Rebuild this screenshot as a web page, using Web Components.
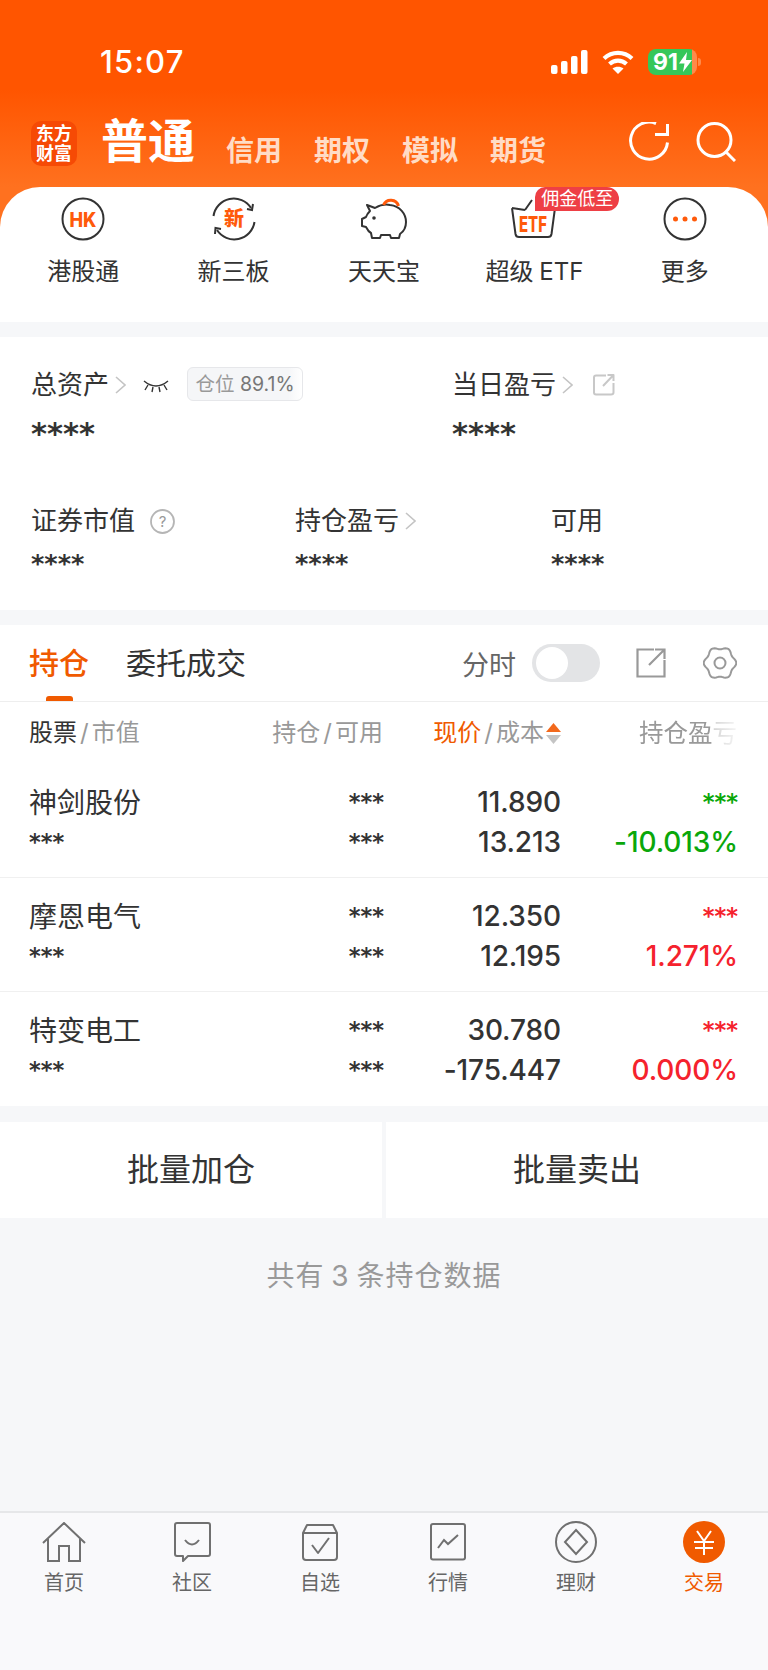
<!DOCTYPE html>
<html lang="zh">
<head>
<meta charset="utf-8">
<title>交易</title>
<style>
    html, body { margin: 0; padding: 0; }
    body {
        width: 768px;
        height: 1670px;
        overflow: hidden;
        display: flex;
        flex-direction: column;
        background: #f6f7f9;
        color: #333;
        font-family: Inter, "Noto Sans CJK SC", sans-serif;
    }
</style>
</head>
<body>
<top-area></top-area>
<asset-panel></asset-panel>
<position-panel>
    <stock-row name="神剑股份" price="11.890" cost="13.213" pl="-10.013%" tone="down"></stock-row>
    <stock-row name="摩恩电气" price="12.350" cost="12.195" pl="1.271%" tone="up"></stock-row>
    <stock-row name="特变电工" price="30.780" cost="-175.447" pl="0.000%" tone="up"></stock-row>
</position-panel>
<batch-buttons></batch-buttons>
<empty-note>共有 3 条持仓数据</empty-note>
<tab-bar></tab-bar>

<script>
const ORANGE = "#f05a00";
const STARS = `"DejaVu Sans", sans-serif`;

function gearPath(c, mid, amp) {
    const pts = [];
    for (let i = 0; i < 72; i++) {
        const t = i * Math.PI / 36;
        const r = mid + amp * Math.cos(6 * t);
        pts.push((c + r * Math.cos(t)).toFixed(2) + " " + (c + r * Math.sin(t)).toFixed(2));
    }
    return "M" + pts.join("L") + "Z";
}

customElements.define("quick-item",
class QuickItem extends HTMLElement {
    constructor() {
        super();
        this.attachShadow({mode: "open"});
        this.shadowRoot.innerHTML = `
<style>
    :host { display: flex; flex-direction: column; align-items: center; flex: 1; position: relative; }
    .icon { height: 50px; margin-top: 7px; display: flex; align-items: center; justify-content: center; }
    .label { margin-top: 10px; font-size: 24px; line-height: 36px; color: #333; white-space: nowrap; word-spacing: -1px; }
</style>
<div class="icon"><slot name="icon"></slot></div>
<div class="label"><slot></slot></div>
<slot name="badge"></slot>`;
    }
});

customElements.define("top-area",
class TopArea extends HTMLElement {
    constructor() {
        super();
        this.attachShadow({mode: "open"});
        this.shadowRoot.innerHTML = `
<style>
    :host {
        display: block;
        background: linear-gradient(#ff5500 0, #ff5500 90px, #ff711f 187px, #ff711f 100%);
    }
    .status { height: 100px; display: flex; align-items: center; padding: 24px 67px 0 100px; box-sizing: border-box; }
    .time { font-size: 31px; letter-spacing: 1.2px; font-weight: 500; color: #fff; line-height: 40px; flex: 1; margin-top: -1px; }
    .status svg { display: block; }
    .wifi { margin-left: 14px; }
    .battery { margin-left: 14px; display: flex; align-items: center; }
    .cell {
        width: 49px; height: 26px; border-radius: 8px; box-sizing: border-box; padding-left: 5px;
        background: linear-gradient(90deg, #35c759 0, #35c759 44px, #ff8a4a 44px);
        color: #fff; font-size: 23px; font-weight: 700; line-height: 26px;
        display: flex; align-items: center;
    }
    .tip { width: 3px; height: 8px; border-radius: 0 3px 3px 0; background: #ff8a4a; margin-left: 1px; }
    .nav { height: 87px; display: flex; align-items: center; padding: 0 32px 0 31px; }
    .logo {
        width: 46px; height: 45px; border-radius: 10px; background: #f64a05;
        color: #fff; font-size: 18px; font-weight: 700; line-height: 20px; text-align: center;
        display: flex; align-items: center; justify-content: center;
    }
    .main { margin-left: 24px; font-size: 47px; font-weight: 700; color: #fff; line-height: 60px; margin-top: -5px; }
    .subs { display: flex; gap: 32px; margin-left: 31px; flex: 1; font-size: 28px; font-weight: 700; color: #ffdcc6; line-height: 40px; padding-top: 14px; }
    .tools { display: flex; gap: 27px; align-items: center; margin-top: -4px; }
    .card {
        background: #fff;
        border-radius: 40px 40px 0 0;
        height: 135px;
        padding: 0 8px;
        display: flex;
        box-sizing: border-box;
    }
    svg text { font-family: Inter, "Noto Sans CJK SC", sans-serif; }
    .badge {
        position: absolute; top: 0; left: 76px; width: 84px; height: 24px;
        background: #ee3f45; color: #fff; font-size: 18px; line-height: 24px; text-align: center;
        border-radius: 10px 12px 12px 0; white-space: nowrap;
    }
</style>
<div class="status">
    <div class="time">15:07</div>
    <svg width="37" height="24" viewBox="0 0 37 24" fill="#fff">
        <rect x="0" y="15" width="6.5" height="9" rx="2"/><rect x="10" y="11" width="6.5" height="13" rx="2"/>
        <rect x="20" y="6" width="6.5" height="18" rx="2"/><rect x="30" y="0" width="6.5" height="24" rx="2"/>
    </svg>
    <svg class="wifi" width="32" height="24" viewBox="0 0 32 24">
        <path d="M2 8.5C10 1 22 1 30 8.5M7.5 14C12.5 9.5 19.5 9.5 24.5 14" fill="none" stroke="#fff" stroke-width="4.2"/>
        <path d="M16 24L10.5 18.5C13.5 16 18.5 16 21.5 18.5Z" fill="#fff"/>
    </svg>
    <div class="battery">
        <div class="cell">91<svg width="13" height="20" viewBox="0 0 13 20" style="margin-left:1px"><path d="M8 0L0 11.5H5.5L4 20L13 8H7Z" fill="#fff"/></svg></div>
        <div class="tip"></div>
    </div>
</div>
<div class="nav">
    <div class="logo"><span>东方<br>财富</span></div>
    <div class="main">普通</div>
    <div class="subs"><span>信用</span><span>期权</span><span>模拟</span><span>期货</span></div>
    <div class="tools">
        <svg width="40" height="40" viewBox="0 0 40 40" fill="none" stroke="#fff" stroke-width="3">
            <path d="M27 1.5A18.5 18.5 0 1 0 38.500 20.500"/><path d="M26 12.500H38.500V2"/>
        </svg>
        <svg width="40" height="40" viewBox="0 0 40 40" fill="none" stroke="#fff" stroke-width="3">
            <circle cx="18.5" cy="18" r="16.5"/><path d="M30 30L39 39"/>
        </svg>
    </div>
</div>
<div class="card">
    <quick-item>
        <svg slot="icon" width="44" height="44" viewBox="0 0 44 44">
            <circle cx="22" cy="22" r="20.5" fill="none" stroke="#333" stroke-width="2"/>
            <text x="22" y="29.500" text-anchor="middle" font-size="20" font-weight="800" fill="#ff5a0a" textLength="27" lengthAdjust="spacingAndGlyphs">HK</text>
        </svg>
        港股通
    </quick-item>
    <quick-item>
        <svg slot="icon" width="44" height="44" viewBox="0 0 44 44" fill="none" stroke="#333" stroke-width="2">
            <path d="M1.5 19A20.5 20.5 0 0 1 39 11"/><path d="M35 12L40 13L41 7"/>
            <path d="M42.5 25A20.5 20.5 0 0 1 5 33"/><path d="M9 32L3.5 31L3 37"/>
            <text x="22" y="29" text-anchor="middle" font-size="20" font-weight="900" fill="#ff5a0a" stroke="none">新</text>
        </svg>
        新三板
    </quick-item>
    <quick-item>
        <svg slot="icon" width="48" height="44" viewBox="0 0 48 44" fill="none" stroke="#333" stroke-width="2" stroke-linejoin="round">
            <path d="M7 8L15 11C20 8 26 7 30 8C40 9 46 17 46 25C46 31 43 35 40 37L39 41H31L30 38H21L20 41H12L11 36C9 35 7 32 6 30L2 29V22L6 20C7 17 9 15 10 14Z"/>
            <circle cx="14" cy="21" r="1.8" fill="#333" stroke="none"/>
            <path d="M23.5 8A8 8 0 0 1 38.5 9" stroke="#ff5a0a" stroke-width="3"/>
        </svg>
        天天宝
    </quick-item>
    <quick-item>
        <svg slot="icon" width="48" height="44" viewBox="0 0 48 44" fill="none" stroke="#333" stroke-width="2" stroke-linejoin="round">
            <path d="M15 13L22 3M2 11L15 13M2 11L5.5 37Q6 40 9 40H38Q41 40 41.5 37L45 11"/>
            <text x="23" y="35" text-anchor="middle" font-size="21" font-weight="800" fill="#ff5a0a" stroke="none" textLength="28" lengthAdjust="spacingAndGlyphs">ETF</text>
        </svg>
        超级 ETF
        <div slot="badge" class="badge">佣金低至</div>
    </quick-item>
    <quick-item>
        <svg slot="icon" width="44" height="44" viewBox="0 0 44 44">
            <circle cx="22" cy="22" r="20.5" fill="none" stroke="#333" stroke-width="2"/>
            <circle cx="12.5" cy="22" r="2.5" fill="#ff5a0a"/><circle cx="22" cy="22" r="2.5" fill="#ff5a0a"/><circle cx="31.5" cy="22" r="2.5" fill="#ff5a0a"/>
        </svg>
        更多
    </quick-item>
</div>`;
    }
});

customElements.define("asset-panel",
class AssetPanel extends HTMLElement {
    constructor() {
        super();
        this.attachShadow({mode: "open"});
        const chevron = `<svg class="chev" width="11" height="18" viewBox="0 0 11 18" fill="none" stroke="#c4c4c4" stroke-width="1.6"><path d="M1 1L10 9L1 17"/></svg>`;
        const share = `<svg width="22" height="22" viewBox="0 0 22 22" fill="none" stroke="#c8c8c8" stroke-width="2" stroke-linejoin="round"><path d="M13 1.5H3Q1 1.5 1 3.5V18.5Q1 20.5 3 20.5H18Q20.5 20.5 20.5 18.5V9"/><path d="M10 12L20 1.5M14.500 1H20.500V7"/></svg>`;
        this.shadowRoot.innerHTML = `
<style>
    :host { display: block; background: #fff; margin-top: 15px; height: 273px; padding: 30px 0 0 31px; box-sizing: border-box; }
    .top { display: grid; grid-template-columns: 421px 1fr; }
    .bottom { display: grid; grid-template-columns: 264px 256px 1fr; margin-top: 51px; }
    .label { display: flex; align-items: center; font-size: 26px; line-height: 36px; height: 36px; color: #333; white-space: nowrap; }
    .chev { margin-left: 6px; }
    .eye { margin-left: 17px; }
    .chip {
        margin: -2px 0 0 18px; width: 116px; height: 34px; box-sizing: border-box; border: 1px solid #e6e7ea; border-radius: 6px;
        background: linear-gradient(90deg, #f5f6f8 0, #f5f6f8 88%, #fff 100%);
        color: #777; font-size: 19.5px; line-height: 32px; text-align: center; white-space: nowrap;
    }
    .chip span { color: #999; }
    .share { margin-left: 20px; display: flex; }
    .help { margin-left: 15px; display: flex; }
    .stars { font-family: ${STARS}; font-weight: 700; font-size: 30.6px; line-height: 36px; margin-top: 13px; color: #333; }
    .small { font-size: 25.5px; margin-top: 7px; line-height: 34px; }
</style>
<div class="top">
    <div>
        <div class="label">总资产${chevron}
            <svg class="eye" width="26" height="16" viewBox="0 0 26 16" fill="none" stroke="#333" stroke-width="1.4"><path d="M1 4Q13 14 25 4M5 8L2 13M10 10L9 15M16 10L17 15M21 8L24 13"/></svg>
            <div class="chip"><span>仓位</span> 89.1%</div>
        </div>
        <div class="stars">****</div>
    </div>
    <div>
        <div class="label">当日盈亏${chevron}<span class="share">${share}</span></div>
        <div class="stars">****</div>
    </div>
</div>
<div class="bottom">
    <div>
        <div class="label">证券市值<span class="help"><svg width="25" height="25" viewBox="0 0 25 25"><circle cx="12.500" cy="12.500" r="11.500" fill="none" stroke="#b5b5b5" stroke-width="1.800"/><text x="12.500" y="18" text-anchor="middle" font-size="15" fill="#999" font-family="Inter">?</text></svg></span></div>
        <div class="stars small">****</div>
    </div>
    <div>
        <div class="label">持仓盈亏${chevron}</div>
        <div class="stars small">****</div>
    </div>
    <div>
        <div class="label">可用</div>
        <div class="stars small">****</div>
    </div>
</div>`;
    }
});

customElements.define("position-panel",
class PositionPanel extends HTMLElement {
    constructor() {
        super();
        this.attachShadow({mode: "open"});
        this.shadowRoot.innerHTML = `
<style>
    :host { display: block; background: #fff; margin-top: 15px; }
    .tabs { height: 76px; display: flex; align-items: center; padding: 0 30px 0 29px; border-bottom: 1px solid #eeeeee; position: relative; }
    .tab { font-size: 30px; line-height: 40px; margin-top: -1px; }
    .on { color: ${ORANGE}; font-weight: 500; }
    .tab + .tab { margin-left: 37px; }
    .bar { position: absolute; left: 46px; bottom: 0; width: 27px; height: 5px; border-radius: 3px 3px 0 0; background: ${ORANGE}; }
    .fill { flex: 1; }
    .sw { font-size: 27px; color: #666; margin-right: 16px; }
    .toggle { width: 68px; height: 38px; border-radius: 19px; background: #e3e4e6; position: relative; }
    .knob { position: absolute; left: 4px; top: 3px; width: 32px; height: 32px; border-radius: 50%; background: #fff; }
    .out { margin-left: 36px; display: flex; }
    .gear { margin-left: 37px; display: flex; margin-right: 1px; }
    .cols {
        display: grid; grid-template-columns: 200px 154px 177px 177px; height: 62px; align-items: center; padding-left: 29px;
        font-size: 24px; color: #999; line-height: 34px; white-space: nowrap;
    }
    .cols > div { text-align: right; }
    .cols > div:first-child { text-align: left; }
    .cols b { font-weight: 400; color: #333; }
    .cols i { font-style: normal; color: ${ORANGE}; }
    .slash { margin: 0 3px; }
    .sort { display: inline-block; vertical-align: -3px; margin-left: 2px; margin-right: -1px; }
    .fade {
        font-size: 24.5px;
        -webkit-mask-image: linear-gradient(90deg, #000 85%, rgba(0,0,0,.4) 87%, rgba(0,0,0,.1) 100%);
        mask-image: linear-gradient(90deg, #000 85%, rgba(0,0,0,.4) 87%, rgba(0,0,0,.1) 100%);
    }
</style>
<div class="tabs">
    <div class="tab on">持仓</div><div class="tab">委托成交</div>
    <div class="fill"></div>
    <div class="sw">分时</div>
    <div class="toggle"><div class="knob"></div></div>
    <div class="out"><svg width="30" height="30" viewBox="0 0 30 30" fill="none" stroke="#999" stroke-width="2.2"><path d="M18 1.500H1.500V28.500H28.500V12"/><path d="M13 17L28 2M19 1.500H28.500V11"/></svg></div>
    <div class="gear"><svg width="34" height="34" viewBox="0 0 34 34" fill="none" stroke="#999" stroke-width="2" stroke-linejoin="round">
        <path d="${gearPath(17, 15, 1.3)}"/><circle cx="17" cy="17" r="5.500"/>
    </svg></div>
    <div class="bar"></div>
</div>
<div class="cols">
    <div><b>股票</b><span class="slash">/</span>市值</div>
    <div>持仓<span class="slash">/</span>可用</div>
    <div><i>现价</i><span class="slash">/</span>成本<svg class="sort" width="15" height="21" viewBox="0 0 15 21"><path d="M7.500 0L15 9H0Z" fill="#f2691c"/><path d="M7.500 21L15 12H0Z" fill="#c4c4c4"/></svg></div>
    <div class="fade">持仓盈亏</div>
</div>
<slot></slot>`;
    }
});

customElements.define("stock-row",
class StockRow extends HTMLElement {
    constructor() {
        super();
        this.attachShadow({mode: "open"});
    }

    connectedCallback() {
        const a = n => this.getAttribute(n);
        const tone = a("tone") === "down" ? "#0aa70a" : "#f5222d";
        this.shadowRoot.innerHTML = `
<style>
    :host { display: block; height: 114px; box-sizing: border-box; padding-top: 18px; }
    :host(:not(:last-child)) { border-bottom: 1px solid #f0f0f0; }
    .grid { display: grid; grid-template-columns: 200px 155px 177px 177px; grid-auto-rows: 40px; align-items: center; padding-left: 29px; color: #333; }
    .name { font-size: 28px; margin-top: -3px; }
    .r { text-align: right; }
    .stars { font-family: ${STARS}; font-weight: 700; font-size: 22.4px; line-height: 40px; height: 40px; }
    .num { font-size: 28px; font-weight: 500; letter-spacing: -0.1px; }
    .pl { color: ${tone}; }
</style>
<div class="grid">
    <div class="name">${a("name")}</div><div class="r stars">***</div><div class="r num">${a("price")}</div><div class="r stars pl">***</div>
    <div class="stars">***</div><div class="r stars">***</div><div class="r num">${a("cost")}</div><div class="r num pl">${a("pl")}</div>
</div>`;
    }
});

customElements.define("batch-buttons",
class BatchButtons extends HTMLElement {
    constructor() {
        super();
        this.attachShadow({mode: "open"});
        this.shadowRoot.innerHTML = `
<style>
    :host { display: flex; gap: 4px; margin-top: 16px; height: 96px; }
    div { flex: 1; background: #fff; font-size: 32px; line-height: 96px; text-align: center; color: #333; }
</style>
<div>批量加仓</div><div>批量卖出</div>`;
    }
});

customElements.define("empty-note",
class EmptyNote extends HTMLElement {
    constructor() {
        super();
        this.attachShadow({mode: "open"});
        this.shadowRoot.innerHTML = `
<style>
    :host { display: block; flex: 1; text-align: center; color: #999; font-size: 28px; letter-spacing: 1px; word-spacing: -2px; line-height: 40px; padding-top: 38px; }
</style>
<slot></slot>`;
    }
});

customElements.define("tab-item",
class TabItem extends HTMLElement {
    constructor() {
        super();
        this.attachShadow({mode: "open"});
        this.shadowRoot.innerHTML = `
<style>
    :host { display: flex; flex-direction: column; align-items: center; width: 128px; color: #666; font-size: 20px; }
    :host([active]) { color: ${ORANGE}; }
    .icon { height: 42px; margin-top: 8px; display: flex; align-items: center; justify-content: center; }
    .label { line-height: 28px; margin-top: 6px; }
</style>
<div class="icon"><slot name="icon"></slot></div>
<div class="label"><slot></slot></div>`;
    }
});

customElements.define("tab-bar",
class TabBar extends HTMLElement {
    constructor() {
        super();
        this.attachShadow({mode: "open"});
        this.shadowRoot.innerHTML = `
<style>
    :host { display: flex; height: 159px; box-sizing: border-box; background: #f9f9fb; border-top: 2px solid #e6e7e9; }
    svg { display: block; }
</style>
<tab-item>
    <svg slot="icon" width="44" height="40" viewBox="0 0 44 40" fill="none" stroke="#707070" stroke-width="2"><path d="M1 21L22 1L43 21M6 17V39H17V24H27V39H38V17"/></svg>
    首页
</tab-item>
<tab-item>
    <svg slot="icon" width="38" height="40" viewBox="0 0 38 40" fill="none" stroke="#707070" stroke-width="2" stroke-linejoin="round"><path d="M2 3Q2 1 4 1H35Q37 1 37 3V32Q37 34 35 34H15L10 39V34H4Q2 34 2 32Z"/><path d="M12 18Q19 27 26 18"/></svg>
    社区
</tab-item>
<tab-item>
    <svg slot="icon" width="38" height="38" viewBox="0 0 38 38" fill="none" stroke="#707070" stroke-width="2" stroke-linejoin="round"><path d="M2 10L6 2H32L36 10V34Q36 37 33 37H5Q2 37 2 34ZM2 10H36"/><path d="M11 22L17 30L28 15"/></svg>
    自选
</tab-item>
<tab-item>
    <svg slot="icon" width="36" height="38" viewBox="0 0 36 38" fill="none" stroke="#707070" stroke-width="2"><rect x="1" y="1" width="34" height="35.500" rx="2"/><path d="M8 25L14 17L18 21L28 12"/></svg>
    行情
</tab-item>
<tab-item>
    <svg slot="icon" width="42" height="42" viewBox="0 0 42 42" fill="none" stroke="#707070" stroke-width="2"><circle cx="21" cy="21" r="20"/><path d="M21 9L32 21L21 33L10 21Z"/></svg>
    理财
</tab-item>
<tab-item active>
    <svg slot="icon" width="42" height="42" viewBox="0 0 42 42"><circle cx="21" cy="21" r="21" fill="${ORANGE}"/><path d="M14 10L21 20L28 10M11 21H31M12 27H30M21 20V34" fill="none" stroke="#fff" stroke-width="2"/></svg>
    交易
</tab-item>`;
    }
});
</script>
</body>
</html>
